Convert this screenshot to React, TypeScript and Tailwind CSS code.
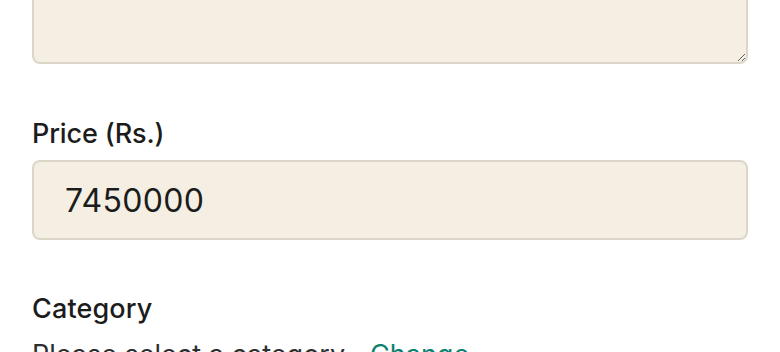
export default function App() {
  return (
    <div className="min-h-screen bg-white px-8 font-['Inter',sans-serif] text-[#1c1c1c] overflow-hidden h-[352px]">
      <div className="w-[716px]">
        <textarea
          className="block w-full h-[120px] -mt-[56px] rounded-lg border-2 border-[#ddd5c8] bg-[#f5eee3] resize-y outline-none"
          defaultValue=""
        />

        <div className="mt-[53px]">
          <label className="block text-[27px] font-medium leading-[34px] tracking-[-0.005em]">Price (Rs.)</label>
          <input
            type="text"
            defaultValue="7450000"
            className="mt-[9px] block w-full h-[80px] rounded-lg border-2 border-[#ddd5c8] bg-[#f5eee3] px-[31px] text-[32px] tracking-[0.01em] text-[#1c1c1c] outline-none"
          />
        </div>

        <div className="mt-[52px]">
          <label className="block text-[27px] font-medium leading-[34px] tracking-[0.005em]">Category</label>
          <p className="mt-3 text-[27px] leading-[34px] text-[#2e2e2e]">
            Please select a category <span className="mx-px">·</span> <span className="text-[#0d8070]">Change</span>
          </p>
        </div>
      </div>
    </div>
  );
}
